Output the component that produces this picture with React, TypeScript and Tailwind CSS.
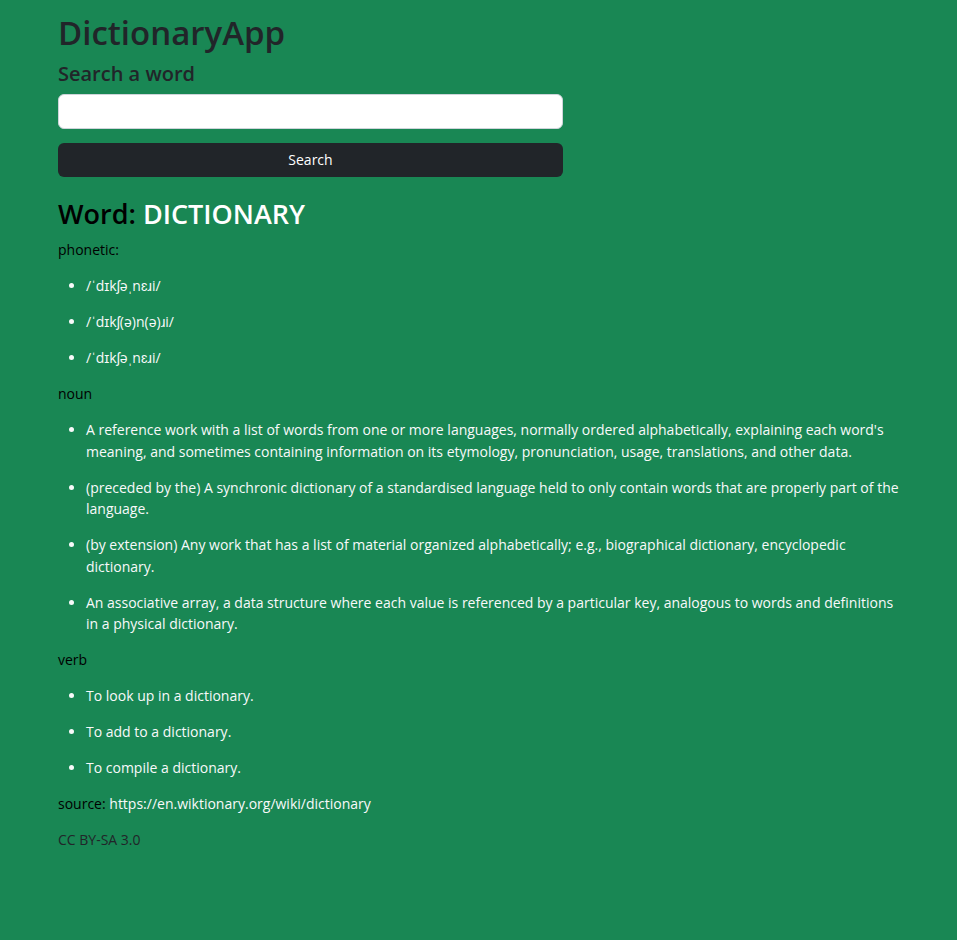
const PHONETICS = ['/ˈdɪkʃəˌnɛɹi/', '/ˈdɪkʃ(ə)n(ə)ɹi/', '/ˈdɪkʃəˌnɛɹi/']

const NOUN = [
  "A reference work with a list of words from one or more languages, normally ordered alphabetically, explaining each word's meaning, and sometimes containing information on its etymology, pronunciation, usage, translations, and other data.",
  '(preceded by the) A synchronic dictionary of a standardised language held to only contain words that are properly part of the language.',
  '(by extension) Any work that has a list of material organized alphabetically; e.g., biographical dictionary, encyclopedic dictionary.',
  'An associative array, a data structure where each value is referenced by a particular key, analogous to words and definitions in a physical dictionary.',
]

const VERB = ['To look up in a dictionary.', 'To add to a dictionary.', 'To compile a dictionary.']

// one bullet list, each row spaced like a paragraph
function Items({ items }: { items: string[] }) {
  return (
    <ul className="list-disc pl-[28px] text-[#f8f9fa]">
      {items.map((t, i) => (
        <li key={i} className="mb-[14.5px]">
          {t}
        </li>
      ))}
    </ul>
  )
}

export default function App() {
  return (
    <div className="min-h-screen bg-[#198754] px-[58px] pt-[13px] pb-10 font-['Open_Sans',sans-serif] text-[14px] leading-[21.5px] text-black">
      <h1 className="mb-[9.5px] text-[33px] leading-[1.2] font-semibold text-[#212529]">DictionaryApp</h1>
      <h4 className="mb-[8px] text-[20px] leading-[1.2] font-semibold text-[#212529]">Search a word</h4>

      <form className="w-[505px]" onSubmit={(e) => e.preventDefault()}>
        <input
          type="text"
          className="block h-[35px] w-full rounded-[6px] border border-[#ced4da] bg-white px-3 text-[14px] text-[#212529] outline-none"
        />
        <button
          type="submit"
          className="mt-[14px] mb-[21px] h-[34px] w-full rounded-[6px] bg-[#212529] text-[14px] text-white"
        >
          Search
        </button>
      </form>

      <h2 className="mb-[9px] text-[27px] leading-[1.2] font-semibold">
        Word: <span className="text-white">DICTIONARY</span>
      </h2>

      <p className="mb-[14.5px]">phonetic:</p>
      <Items items={PHONETICS} />

      <p className="mb-[14.5px]">noun</p>
      <Items items={NOUN} />

      <p className="mb-[14.5px]">verb</p>
      <Items items={VERB} />

      <p className="mb-[14.5px]">
        source:{' '}
        <a href="#" className="text-[#f8f9fa]">
          https://en.wiktionary.org/wiki/dictionary
        </a>
      </p>
      <p className="text-[#212529]">CC BY-SA 3.0</p>
    </div>
  )
}
